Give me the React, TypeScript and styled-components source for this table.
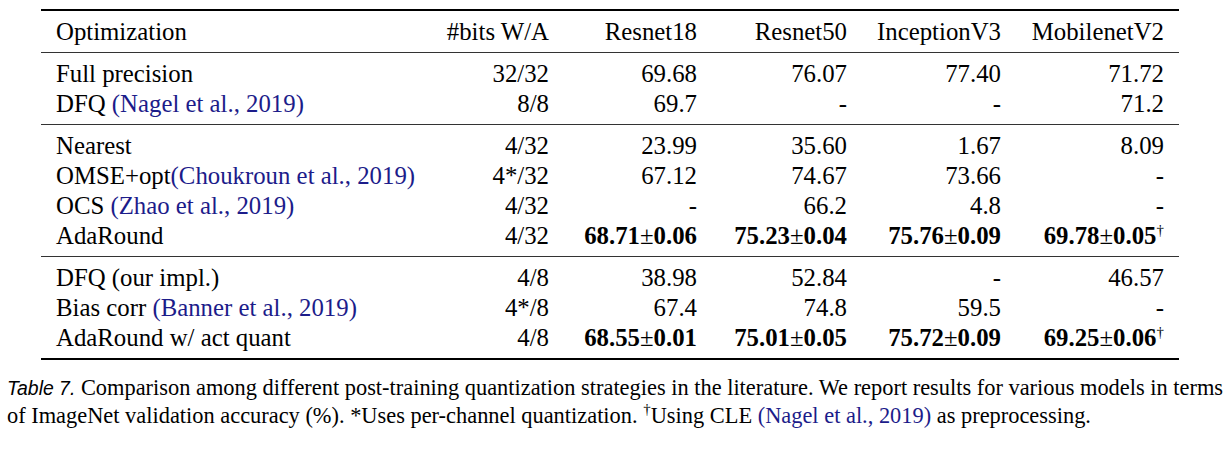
import { createGlobalStyle, styled } from 'styled-components';

const GlobalStyle = createGlobalStyle`
  html, body {
    margin: 0;
    padding: 0;
    background: #fff;
  }
  body {
    font-family: 'Liberation Serif', 'Times New Roman', serif;
    color: #000;
  }
`;

const Page = styled.div`
  width: 1229px;
  height: 455px;
  padding-top: 9px;
  box-sizing: border-box;
  overflow: hidden;
`;

const Table = styled.div`
  margin-left: 41px;
  width: 1138px;
  border-top: 2px solid #000;
  border-bottom: 2px solid #000;
  font-size: 24.8px;
`;

const Group = styled.div<{ $last?: boolean }>`
  padding: 6px 0 5px;
  border-bottom: ${(p) => (p.$last ? 'none' : '1px solid #333')};
`;

const Row = styled.div`
  display: grid;
  grid-template-columns: 390px 133px 148px 150px 154px 163px;
  height: 30px;
  align-items: center;
  line-height: 30px;
  white-space: nowrap;
`;

const Cell = styled.div<{ $left?: boolean; $bold?: boolean }>`
  padding: 0 15px;
  text-align: ${(p) => (p.$left ? 'left' : 'right')};
  font-weight: ${(p) => (p.$bold ? 700 : 400)};
`;

const Cite = styled.span`
  color: #1c1c8a;
`;

const Pm = styled.span`
  font-weight: 400;
`;

const Dagger = styled.sup`
  font-size: 15px;
  font-weight: 400;
  line-height: 0;
  vertical-align: 9px;
`;

const Caption = styled.div`
  margin-top: 14px;
  padding-left: 7px;
  font-size: 22.4px;
  line-height: 28px;
  white-space: nowrap;
`;

const Label = styled.i`
  font-family: 'Liberation Sans', Arial, sans-serif;
  font-size: 19.4px;
`;

type Val = string | { v: string; bold?: boolean; dagger?: boolean };

type RowData = { name: React.ReactNode; bits: string; vals: Val[] };

const groups: RowData[][] = [
  [
    { name: 'Full precision', bits: '32/32', vals: ['69.68', '76.07', '77.40', '71.72'] },
    {
      name: (
        <>
          DFQ <Cite>(Nagel et al., 2019)</Cite>
        </>
      ),
      bits: '8/8',
      vals: ['69.7', '-', '-', '71.2'],
    },
  ],
  [
    { name: 'Nearest', bits: '4/32', vals: ['23.99', '35.60', '1.67', '8.09'] },
    {
      name: (
        <>
          OMSE+opt<Cite>(Choukroun et al., 2019)</Cite>
        </>
      ),
      bits: '4*/32',
      vals: ['67.12', '74.67', '73.66', '-'],
    },
    {
      name: (
        <>
          OCS <Cite>(Zhao et al., 2019)</Cite>
        </>
      ),
      bits: '4/32',
      vals: ['-', '66.2', '4.8', '-'],
    },
    {
      name: 'AdaRound',
      bits: '4/32',
      vals: [
        { v: '68.71±0.06', bold: true },
        { v: '75.23±0.04', bold: true },
        { v: '75.76±0.09', bold: true },
        { v: '69.78±0.05', bold: true, dagger: true },
      ],
    },
  ],
  [
    { name: 'DFQ (our impl.)', bits: '4/8', vals: ['38.98', '52.84', '-', '46.57'] },
    {
      name: (
        <>
          Bias corr <Cite>(Banner et al., 2019)</Cite>
        </>
      ),
      bits: '4*/8',
      vals: ['67.4', '74.8', '59.5', '-'],
    },
    {
      name: 'AdaRound w/ act quant',
      bits: '4/8',
      vals: [
        { v: '68.55±0.01', bold: true },
        { v: '75.01±0.05', bold: true },
        { v: '75.72±0.09', bold: true },
        { v: '69.25±0.06', bold: true, dagger: true },
      ],
    },
  ],
];

function renderVal(val: Val, i: number) {
  if (typeof val === 'string') return <Cell key={i}>{val}</Cell>;
  const [a, b] = val.v.split('±');
  return (
    <Cell key={i} $bold={val.bold}>
      {a}
      <Pm>±</Pm>
      {b}
      {val.dagger && <Dagger>†</Dagger>}
    </Cell>
  );
}

export default function App() {
  return (
    <Page>
      <GlobalStyle />
      <Table>
        <Group>
          <Row>
            <Cell $left>Optimization</Cell>
            <Cell>#bits W/A</Cell>
            <Cell>Resnet18</Cell>
            <Cell>Resnet50</Cell>
            <Cell>InceptionV3</Cell>
            <Cell>MobilenetV2</Cell>
          </Row>
        </Group>
        {groups.map((rows, gi) => (
          <Group key={gi} $last={gi === groups.length - 1}>
            {rows.map((r, ri) => (
              <Row key={ri}>
                <Cell $left>{r.name}</Cell>
                <Cell>{r.bits}</Cell>
                {r.vals.map(renderVal)}
              </Row>
            ))}
          </Group>
        ))}
      </Table>
      <Caption>
        <Label>Table 7.</Label> Comparison among different post-training quantization strategies in the literature. We
        report results for various models in terms
        <br />
        of ImageNet validation accuracy (%). *Uses per-channel quantization. <Dagger>†</Dagger>Using CLE{' '}
        <Cite>(Nagel et al., 2019)</Cite> as preprocessing.
      </Caption>
    </Page>
  );
}
